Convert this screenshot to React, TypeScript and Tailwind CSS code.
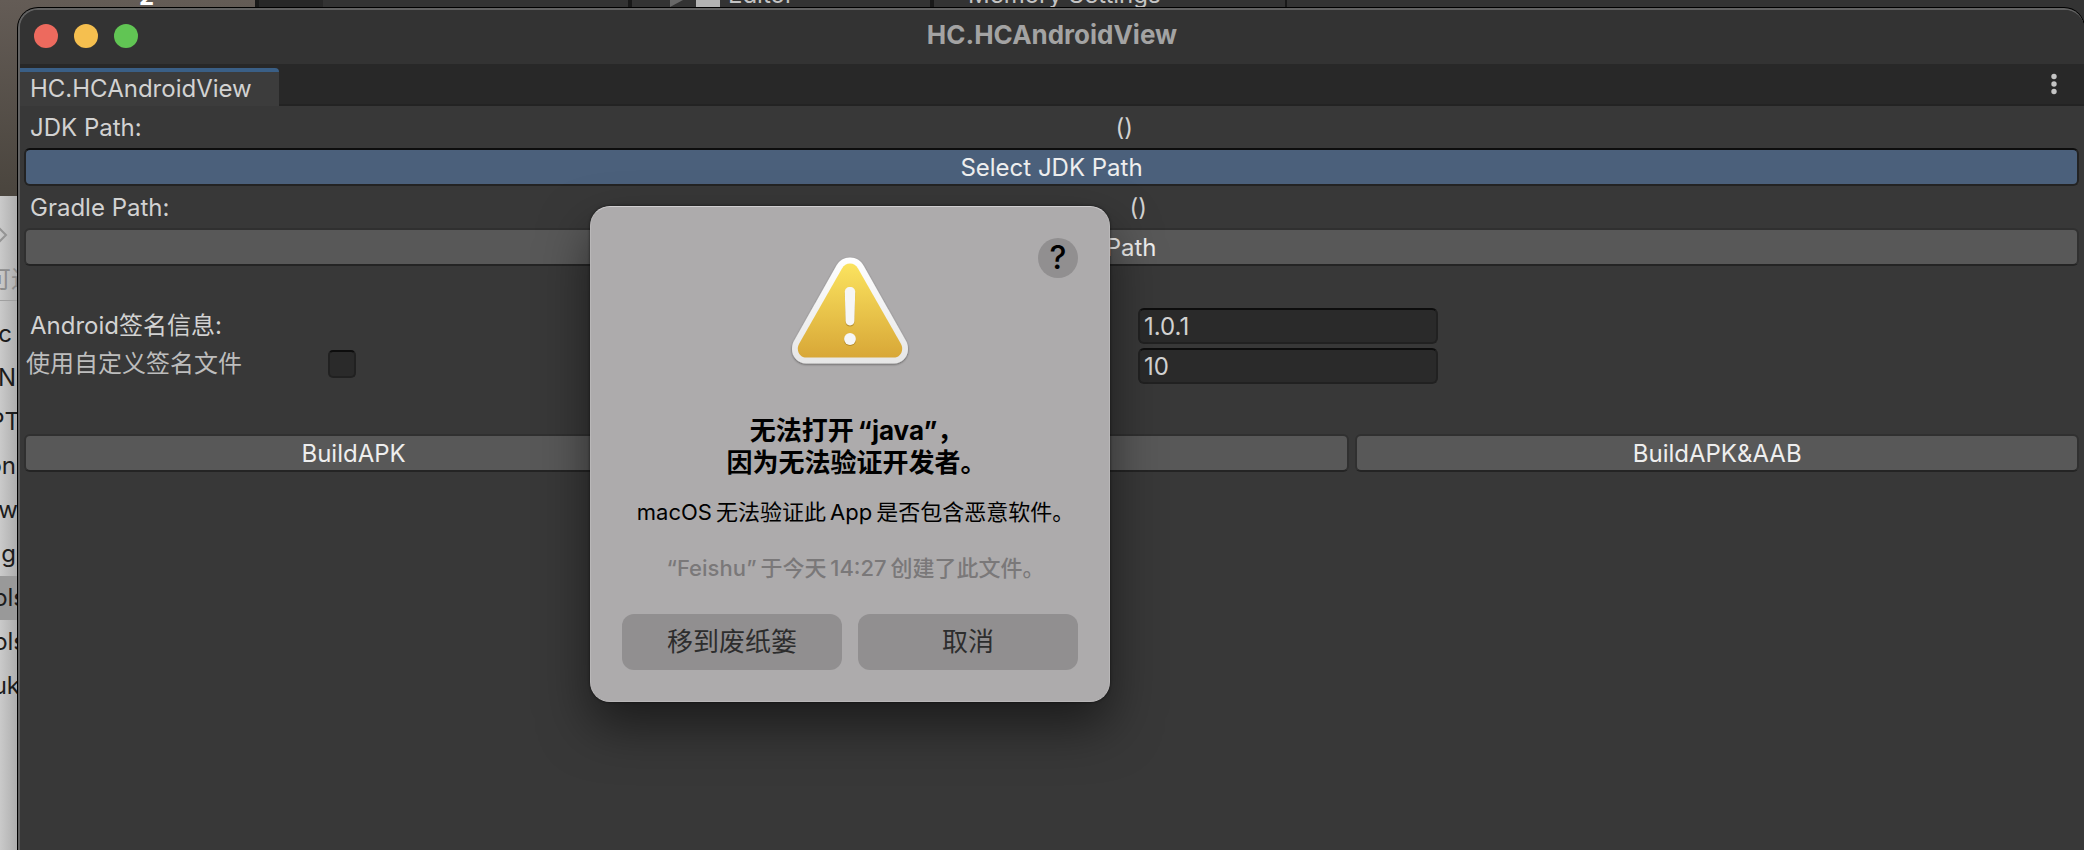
import { useState } from "react";
import type { ReactNode } from "react";

const sidebarItems = [
  { text: "c", pad: "pr-3.5" },
  { text: "N", pad: "pr-2.5" },
  { text: "PT", pad: "pr-1.5" },
  { text: "on", pad: "pr-2.5" },
  { text: "w", pad: "pr-2" },
  { text: "ug", pad: "pr-2.5" },
  { text: "ols", pad: "pr-0", selected: true },
  { text: "ols", pad: "pr-0" },
  { text: "uk", pad: "pr-1.5" },
];

function Backdrop() {
  return (
    <div aria-hidden="true" className="absolute inset-0 flex overflow-hidden bg-[#333333]">
      <div className="flex w-[255px] shrink-0 flex-col bg-linear-to-b from-[#645c56] to-[#4a453e] to-[196px]">
        <div className="flex h-[196px] justify-center pl-[38px] text-[24px] leading-[24px] font-bold text-white">
          <span className="-mt-[15px]">2</span>
        </div>
        <div className="flex w-[26px] grow flex-col bg-linear-to-r from-[#cacaca] via-[#aeaeae] via-[17px] to-[#a0a0a0]">
          <div className="flex h-[105px] shrink-0 flex-col items-start justify-end gap-5 border-b border-[#a0a0a0] pb-1 text-[24px] leading-[32px] text-[#8c8c8c]">
            <svg viewBox="0 0 8 18" className="h-[18px] w-[8px] shrink-0" fill="none" stroke="#949494" strokeWidth="2">
              <path d="M-2 1l8 8-8 8" />
            </svg>
            <span className="-ml-[13px] whitespace-nowrap">可进</span>
          </div>
          <ul className="mt-[11px] text-[24px] leading-[44px] text-[#1c1c1c]">
            {sidebarItems.map((item, i) => (
              <li
                key={i}
                className={`flex h-[44px] justify-end ${item.pad} ${item.selected ? "bg-[#999999]" : ""}`}
              >
                {item.text}
              </li>
            ))}
          </ul>
        </div>
      </div>
      <div className="flex h-[8px] grow items-end text-[24px] leading-[26px] text-[#c4c4c4]">
        <div className="h-full w-[68px] shrink-0 border-l-4 border-[#191919] bg-[#282828]" />
        <div className="h-full w-[305px] shrink-0" />
        <div className="flex h-full w-[302px] shrink-0 items-end border-l-4 border-[#191919] pl-[38px]">
          <svg viewBox="0 0 14 8" className="h-[8px] w-[14px]" fill="#686868">
            <path d="M0 0h13L0 7z" />
          </svg>
          <div className="ml-3 h-full w-[24px] bg-[#b4b4b4]" />
          <span className="ml-2">Editor</span>
        </div>
        <div className="flex h-full w-[357px] shrink-0 items-end border-x-4 border-r-2 border-[#191919] pl-[34px]">
          Memory Settings
        </div>
      </div>
    </div>
  );
}

function EditorButton({ children, active, className = "" }: { children: ReactNode; active?: boolean; className?: string }) {
  const tone = active
    ? "border-[#232323] border-t-[#0d0d0d] bg-[#4b607b]"
    : "border-[#303030] border-b-[#242424] bg-[#585858]";
  return (
    <button
      type="button"
      className={`h-[38px] rounded-[6px] border-2 pt-0.5 text-[24px] leading-[32px] text-[#eeeeee] ${tone} ${className}`}
    >
      {children}
    </button>
  );
}

function PathRow({ label }: { label: string }) {
  return (
    <div className="flex h-[42px] items-center pt-0.5 text-[24px] leading-[32px] text-[#d2d2d2]">
      <span className="flex-auto pr-3 pl-1.5">{label}</span>
      <span className="flex-auto pl-4">()</span>
    </div>
  );
}

function EditorField({ label, initial }: { label: string; initial: string }) {
  const [value, setValue] = useState(initial);
  return (
    <input
      aria-label={label}
      value={value}
      onChange={(e) => setValue(e.target.value)}
      className="h-[36px] w-[300px] rounded-[6px] border-2 border-[#212121] border-t-[#0d0d0d] bg-[#2a2a2a] px-1 text-[24px] leading-[32px] text-[#d2d2d2] outline-none"
    />
  );
}

function WarningIcon() {
  return (
    <svg viewBox="0 0 124 116" className="h-[116px] w-[124px]" aria-hidden="true">
      <defs>
        <linearGradient id="warn-fill" x1="0" y1="0" x2="0" y2="1">
          <stop offset="0" stopColor="#fbe35f" />
          <stop offset="1" stopColor="#d8a737" />
        </linearGradient>
        <linearGradient id="warn-rim" x1="0" y1="0" x2="0" y2="1">
          <stop offset="0" stopColor="#ffffff" />
          <stop offset="1" stopColor="#e6e6e6" />
        </linearGradient>
        <filter id="warn-shadow" x="-10%" y="-10%" width="120%" height="125%">
          <feDropShadow dx="0" dy="1" stdDeviation="1.2" floodOpacity="0.45" />
        </filter>
      </defs>
      <path
        filter="url(#warn-shadow)"
        fill="url(#warn-rim)"
        d="M48.500 11.500C51.500 6.300 56 3.500 62 3.500s10.500 2.800 13.500 8L117.800 86.500c1.600 2.900 2.200 5.400 2.200 8.500 0 8-6 14.500-14 14.500H18c-8 0-14-6.500-14-14.500 0-3.100.6-5.600 2.200-8.500z"
      />
      <path
        fill="url(#warn-fill)"
        d="M54 14.500c2-3.500 4.500-5.100 8-5.100s6 1.600 8 5.100L112.600 89.200c1.100 2 1.600 3.600 1.600 5.500 0 5-3.600 8.900-8.600 8.900H18.400c-5 0-8.600-3.900-8.600-8.900 0-1.900.5-3.500 1.600-5.500z"
      />
      <g fill="#9a7420" opacity="0.6" transform="translate(0 1.200)">
        <path d="M56.800 38c0-3 2-5 5.200-5s5.200 2 5.200 5l-.8 29c-.1 2.800-1.800 4.400-4.400 4.400s-4.300-1.600-4.400-4.400z" />
        <circle cx="62" cy="85" r="5.900" />
      </g>
      <g fill="#f6f6f6">
        <path d="M56.800 38c0-3 2-5 5.200-5s5.200 2 5.200 5l-.8 29c-.1 2.800-1.800 4.400-4.400 4.400s-4.300-1.600-4.400-4.400z" />
        <circle cx="62" cy="85" r="5.900" />
      </g>
    </svg>
  );
}

function AlertDialog() {
  return (
    <div
      role="alertdialog"
      aria-labelledby="alert-title"
      aria-describedby="alert-text"
      className="absolute top-[206px] left-[590px] flex w-[520px] flex-col items-center rounded-[20px] border border-[#b9b7b8] border-t-[#d0ced0] bg-[#adabac] px-[31px] pb-[31px] text-center text-black shadow-[0_24px_50px_rgba(0,0,0,0.5),0_0_3px_rgba(0,0,0,0.6)] [font-feature-settings:'halt']"
    >
      <button
        type="button"
        aria-label="帮助"
        className="absolute top-[31px] right-[31px] flex size-[40px] items-center justify-center rounded-full bg-[#918f90] text-[32px] leading-[40px] font-medium"
      >
        ?
      </button>
      <div className="mt-[47px]">
        <WarningIcon />
      </div>
      <h2 id="alert-title" className="mt-[45px] text-[26px] leading-[32px] font-bold">
        无法打开{"\u2009"}“java”，
        <br />
        因为无法验证开发者。
      </h2>
      <p id="alert-text" className="mt-[19px] text-[22px] leading-[28px] whitespace-nowrap">
        macOS{"\u2009"}无法验证此{"\u2009"}App{"\u2009"}是否包含恶意软件。
      </p>
      <p className="mt-[28px] text-[22px] leading-[28px] font-medium whitespace-nowrap text-[#7a7879]">
        “Feishu”{"\u2009"}于今天{"\u2009"}14:27{"\u2009"}创建了此文件。
      </p>
      <div className="mt-[32px] grid w-full grid-cols-2 gap-4 text-[26px] leading-[32px] text-[#2d2d2d]">
        <button type="button" className="h-[56px] rounded-[12px] bg-[#918f90]">移到废纸篓</button>
        <button type="button" className="h-[56px] rounded-[12px] bg-[#918f90]">取消</button>
      </div>
    </div>
  );
}

export default function App() {
  const [customSign, setCustomSign] = useState(false);
  return (
    <div className="relative flex min-h-screen overflow-hidden pt-[8px] pl-[18px] font-['Inter','Noto_Sans_CJK_SC',sans-serif]">
      <Backdrop />
      <main className="relative flex grow flex-col overflow-hidden rounded-t-[20px] border-t-2 border-l-2 border-[#626262] bg-[#383838] shadow-[0_0_0_1px_#000000]">
        <header className="grid h-[54px] grid-cols-[1fr_auto_1fr] items-center bg-[#333333] pb-0.5">
          <div className="flex gap-4 pl-[14px]">
            <button type="button" aria-label="Close" className="size-[24px] rounded-full bg-[#ed6a5e]" />
            <button type="button" aria-label="Minimize" className="size-[24px] rounded-full bg-[#f5bf4f]" />
            <button type="button" aria-label="Zoom" className="size-[24px] rounded-full bg-[#61c554]" />
          </div>
          <h1 className="pb-0.5 text-[26px] leading-[32px] font-bold text-[#a3a3a3]">HC.HCAndroidView</h1>
        </header>
        <nav className="flex h-[42px] items-end justify-between border-b-2 border-[#232323] bg-[#282828]">
          <button
            type="button"
            className="-mb-0.5 h-[38px] rounded-tr-[4px] border-t-4 border-[#3a5f86] bg-[#3c3c3c] pr-[27px] pl-[10px] text-[24px] leading-[32px] text-[#d2d2d2]"
          >
            HC.HCAndroidView
          </button>
          <button type="button" aria-label="Menu" className="mr-[23px] mb-[5px] p-1">
            <svg viewBox="0 0 6 22" className="h-[22px] w-[6px]" fill="#c4c4c4">
              <circle cx="3" cy="3.500" r="2.700" />
              <circle cx="3" cy="11" r="2.700" />
              <circle cx="3" cy="18.500" r="2.700" />
            </svg>
          </button>
        </nav>
        <section className="flex flex-col pr-[5px] pl-1">
          <PathRow label="JDK Path:" />
          <EditorButton active>Select JDK Path</EditorButton>
          <PathRow label="Gradle Path:" />
          <EditorButton>Select Gradle Path</EditorButton>
          <div className="mt-[42px] grid grid-cols-[1114fr_941fr] text-[24px] text-[#d2d2d2]">
            <div className="flex flex-col">
              <h2 className="pl-1.5 leading-[36px]">Android签名信息:</h2>
              <div className="flex h-[40px] items-center">
                <label htmlFor="custom-sign" className="w-[304px] pl-0.5 leading-[40px] text-[#bdbdbd]">
                  使用自定义签名文件
                </label>
                <input
                  id="custom-sign"
                  type="checkbox"
                  checked={customSign}
                  onChange={(e) => setCustomSign(e.target.checked)}
                  className="size-[28px] appearance-none rounded-[5px] border-2 border-[#212121] border-t-[#0d0d0d] bg-[#2a2a2a] checked:bg-[#4b607b]"
                />
              </div>
            </div>
            <div className="flex flex-col gap-1">
              <EditorField label="Version" initial="1.0.1" />
              <EditorField label="Version Code" initial="10" />
            </div>
          </div>
          <div className="mt-[50px] flex gap-1.5">
            <EditorButton className="flex-auto">BuildAPK</EditorButton>
            <EditorButton className="flex-auto">BuildAAB</EditorButton>
            <EditorButton className="flex-auto">BuildAPK&amp;AAB</EditorButton>
          </div>
        </section>
      </main>
      <AlertDialog />
    </div>
  );
}
